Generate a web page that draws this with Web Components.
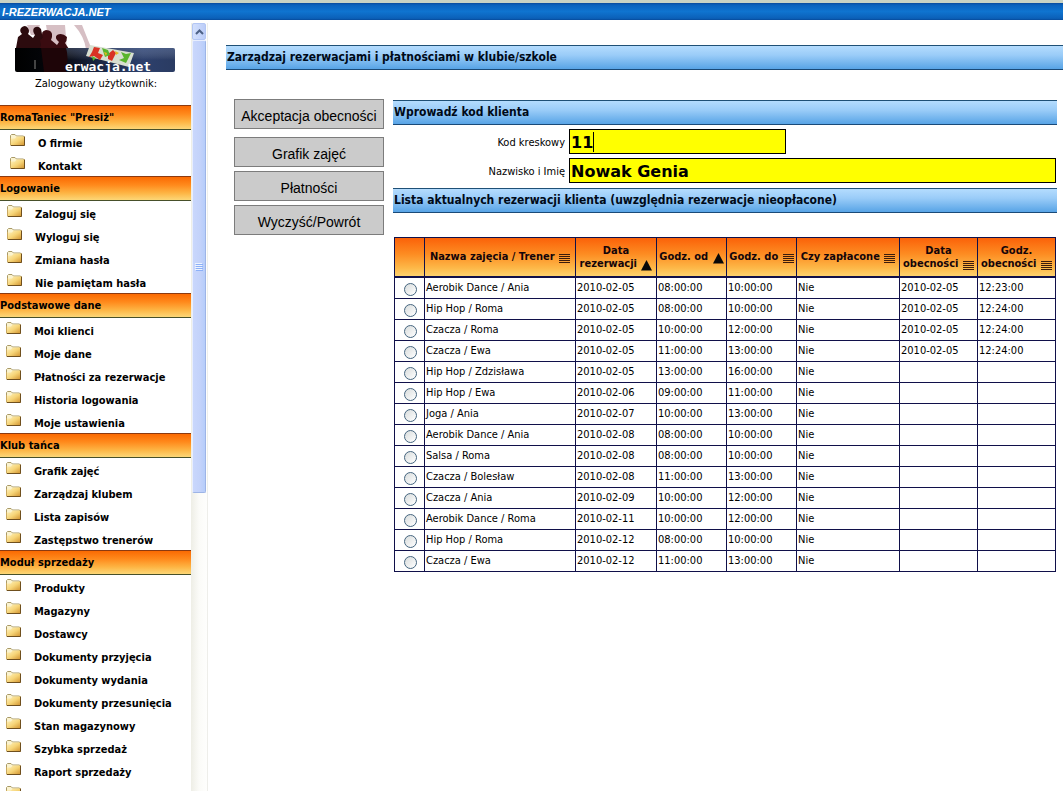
<!DOCTYPE html>
<html lang="pl">
<head>
<meta charset="utf-8">
<title>I-REZERWACJA.NET</title>
<style>
  html, body { height: 100%; }
  body { margin: 0; background: #fff; color: #000; overflow: hidden;
    font-family: "DejaVu Sans Condensed", "DejaVu Sans", sans-serif; font-size: 11px; }
</style>
</head>
<body>
<app-shell>
  <side-menu slot="side">
    <menu-section heading='RomaTaniec "Presiż"' style="--indent:10px">
      <menu-item>O firmie</menu-item><menu-item>Kontakt</menu-item>
    </menu-section>
    <menu-section heading="Logowanie" style="--indent:7px">
      <menu-item>Zaloguj się</menu-item><menu-item>Wyloguj się</menu-item><menu-item>Zmiana hasła</menu-item><menu-item>Nie pamiętam hasła</menu-item>
    </menu-section>
    <menu-section heading="Podstawowe dane">
      <menu-item>Moi klienci</menu-item><menu-item>Moje dane</menu-item><menu-item>Płatności za rezerwacje</menu-item><menu-item>Historia logowania</menu-item><menu-item>Moje ustawienia</menu-item>
    </menu-section>
    <menu-section heading="Klub tańca">
      <menu-item>Grafik zajęć</menu-item><menu-item>Zarządzaj klubem</menu-item><menu-item>Lista zapisów</menu-item><menu-item>Zastępstwo trenerów</menu-item>
    </menu-section>
    <menu-section heading="Moduł sprzedaży">
      <menu-item>Produkty</menu-item><menu-item>Magazyny</menu-item><menu-item>Dostawcy</menu-item><menu-item>Dokumenty przyjęcia</menu-item><menu-item>Dokumenty wydania</menu-item><menu-item>Dokumenty przesunięcia</menu-item><menu-item>Stan magazynowy</menu-item><menu-item>Szybka sprzedaż</menu-item><menu-item>Raport sprzedaży</menu-item><menu-item></menu-item>
    </menu-section>
  </side-menu>
  <blue-band>Zarządzaj rezerwacjami i płatnościami w klubie/szkole</blue-band>
  <booking-panel></booking-panel>
</app-shell>

<script>
const define = (name, html, setup) => {
  const tpl = document.createElement('template');
  tpl.innerHTML = html;
  customElements.define(name, class extends HTMLElement {
    constructor() {
      super();
      this.attachShadow({ mode: 'open' }).append(tpl.content.cloneNode(true));
    }
    connectedCallback() { if (setup) setup(this, this.shadowRoot); }
  });
};

define('app-shell', `
<style>
  :host { display: flex; flex-direction: column; height: 100vh; }
  header { flex: none; box-sizing: border-box; height: 20px; border-top: 3px solid #c9d3c4; padding-left: 2px;
    background: linear-gradient(#0a4a9c 0, #0a62bd 2px, #0f74d0 50%, #0b60b8 90%, #06499a); }
  h1 { margin: 0; font-size: 11px; line-height: 19px; font-style: italic; font-weight: bold; color: #fff;
    font-family: "Liberation Sans", sans-serif; }
  .cols { flex: 1; min-height: 0; display: flex; padding-top: 3px; }
  aside { flex: none; width: 191px; overflow: hidden; }
  main { flex: 1; min-width: 0; padding: 22px 0 0 18px; }
</style>
<header><h1>I-REZERWACJA.NET</h1></header>
<div class="cols">
  <aside><slot name="side"></slot></aside>
  <scroll-track></scroll-track>
  <main><slot></slot></main>
</div>`);

define('scroll-track', `
<style>
  :host { flex: none; display: flex; flex-direction: column; box-sizing: border-box; width: 17px; padding: 0 1px;
    background: linear-gradient(90deg, #eeeee6, #fbfbf8 50%, #fefefd); border-right: 1px solid #eeeeea; }
  .up { flex: none; height: 17px; display: grid; place-items: center; box-sizing: border-box;
    border: 1px solid #b3c6f4; border-radius: 2px; background: linear-gradient(90deg, #d3e0fd, #bccdf8); }
  .thumb { height: 59%; box-sizing: border-box; border: 1px solid #9db4e6; border-left-color: #e8eefe; border-top-color: #e8eefe; border-radius: 2px;
    background: linear-gradient(90deg, #c9d7fc 0, #c3d2fa 60%, #b6cdfa); display: grid; place-items: center; }
  svg { display: block; }
</style>
<div class="up"><svg width="9" height="6" viewBox="0 0 9 6"><path d="M1 5L4.500 1.500L8 5" fill="none" stroke="#4d6185" stroke-width="2"/></svg></div>
<div class="thumb"><svg width="8" height="8" viewBox="0 0 8 8" shape-rendering="crispEdges"><path d="M0 .5h7M0 2.500h7M0 4.500h7M0 6.500h7" stroke="#eef4fe"/><path d="M1 1.500h7M1 3.500h7M1 5.500h7M1 7.500h7" stroke="#8cb0f8"/></svg></div>`);

define('side-menu', `
<style>
  :host { display: block; }
  .top { height: 82px; }
  svg { display: block; }
  p { margin: 0; padding-left: 35px; line-height: 17px; padding-top: 2px; }
</style>
<div class="top">
  <svg width="191" height="50" viewBox="0 0 191 50" role="img" aria-label="i-rezerwacja.net">
    <defs>
      <linearGradient id="bar"><stop offset="0" stop-color="#000"/><stop offset=".28" stop-color="#05070d"/><stop offset=".5" stop-color="#17233f"/><stop offset=".8" stop-color="#2d406c"/><stop offset="1" stop-color="#2a3b62"/></linearGradient>
      <linearGradient id="shade" x2="0" y2="1"><stop offset="0" stop-color="#8ba0cc" stop-opacity=".3"/><stop offset=".5" stop-color="#fff" stop-opacity="0"/></linearGradient>
    </defs>
    <path d="M27 2H40L36 12H31ZM46 2H65L67 27H50ZM74 2H82L92 27L86 26Q84 13 74 2Z" fill="#d6bfc4"/>
    <path d="M16 25L18 14L22 11Q19 8 21 5Q25 1 28 5Q30 8 28 11L33 15L35 12Q32 8 34 5Q38 2 41 6L42 11L44 13Q40 22 42 26V49H20Z" fill="#2c0b0e"/>
    <path d="M41 22L40 17L43 15Q40 8 46 7Q53 7 52 14L51 17L57 22L59 19Q54 15 57 12Q62 9 67 14Q67 18 65 20L69 26V49H41L39 27Z" fill="#3a0b10"/>
    <path d="M15 25H173Q175 25 175 27V47Q175 49 173 49H17Q15 49 15 47Z" fill="url(#bar)"/>
    <path d="M66 25H173Q175 25 175 27V49H68Z" fill="url(#shade)"/>
    <path d="M41 25H66Q69 35 66 49H44Z" fill="#1e0508"/>
    <path d="M90 22L134 30L129 44L86 33Z" fill="#d8dfd0"/>
    <path d="M94 24l6 1-2 5 5 2-3 5-6-4-5 1 3-5zM108 31l5-4 3 3-4 8-4-2z" fill="#d93225"/>
    <path d="M102 25l6 2 2 5-5 2zM121 29l5 2 5-1-5 10-7-3 5-2zM92 33l4 2-3 3z" fill="#59b52d"/>
    <path d="M104 29l3 1-1 3zM115 28l4 2-3 2z" fill="#e9b91f"/>
    <path d="M34 37h2v9h-2z" fill="#444"/>
    <text x="65" y="48" font-family="DejaVu Sans Mono, monospace" font-size="13" font-weight="bold" fill="#fff">erwacja.net</text>
  </svg>
  <p>Zalogowany użytkownik:</p>
</div>
<slot></slot>`);

define('menu-section', `
<style>
  :host { display: block; --pad: var(--indent, 6px); }
  h2 { margin: 0; box-sizing: border-box; height: 25px; font-size: 11px; line-height: 24px; font-weight: bold; white-space: nowrap;
    border-top: 1px solid #8c3a10; border-bottom: 1px solid #47502a;
    background: linear-gradient(#fb6a02, #ff8a1c 35%, #fdb544 70%, #fcd777); }
</style>
<h2></h2><slot></slot>`, (el, root) => { root.querySelector('h2').textContent = el.getAttribute('heading'); });

define('menu-item', `
<style>
  :host { display: block; }
  a { display: flex; gap: 12px; height: 23px; box-sizing: border-box; padding-left: var(--pad); color: #000; text-decoration: none;
    font-weight: bold; line-height: 28px; white-space: nowrap; }
  svg { flex: none; margin-top: 4px; }
</style>
<a href="#">
  <svg width="16" height="13" viewBox="0 0 16 13" aria-hidden="true">
    <defs><linearGradient id="f" x2="1" y2="1"><stop offset="0" stop-color="#fff3c0"/><stop offset=".5" stop-color="#f6d477"/><stop offset="1" stop-color="#d0902c"/></linearGradient></defs>
    <path d="M.5 11.500V1.500L1.500.5H5L6.500 2H13.500V4" fill="#fbf3cf" stroke="#a99a68"/>
    <path d="M1 11.500V4.500L5 4.500L6.500 2.500H15V11.500Z" fill="url(#f)"/>
    <path d="M1 11.500H14.500V2.500" fill="none" stroke="#6f4f1e"/>
    <path d="M.5 11V4" stroke="#c8a860"/>
  </svg>
  <slot></slot>
</a>`);

define('blue-band', `
<style>
  :host { display: block; }
  h2 { margin: 0; box-sizing: border-box; height: 25px; padding-left: 1px; font-size: 12px; line-height: 23px; font-weight: bold; white-space: nowrap;
    color: #000a18; border-top: 1px solid #1f5076; border-bottom: 1px solid #1a4a78;
    background: linear-gradient(#b4dcfe, #9accf8 40%, #58a4e6); }
</style>
<h2><slot></slot></h2>`);

define('grey-button', `
<style>
  :host { display: block; }
  button { display: block; width: 100%; height: 30px; box-sizing: border-box; margin: 0; padding: 3px 0 0; border: 1px solid #7c7c7c;
    background: #cbcbcb; color: #000; font: 14px "Liberation Sans", sans-serif; white-space: nowrap; }
</style>
<button type="button"><slot></slot></button>`);

define('client-field', `
<style>
  :host { display: flex; align-items: center; gap: 4px; }
  label { flex: none; width: 172px; text-align: right; padding-top: 1px; }
  input { flex: 1; min-width: 0; max-width: var(--field, none); height: 25px; box-sizing: border-box; margin: 0; padding: 1px 1px 0;
    border: 1px solid #000; border-radius: 0; outline: none; background: #ff0; color: #000;
    font: bold 16px "DejaVu Sans", sans-serif; }
  .box { position: relative; flex: 1; display: flex; min-width: 0; }
  .caret { display: none; position: absolute; left: 24px; top: 3px; width: 1px; height: 20px; background: #000; }
  :host([active]) .caret { display: block; }
</style>
<label for="v"></label><div class="box"><input id="v" type="text"><span class="caret"></span></div>`, (el, root) => {
  root.querySelector('label').textContent = el.getAttribute('label');
  root.querySelector('input').value = el.getAttribute('value');
});

define('booking-table', `
<style>
  :host { display: block; }
  table { width: 100%; border-collapse: collapse; table-layout: fixed; }
  th, td { border: 1px solid #10104a; padding: 0 0 0 1px; text-align: left; font-size: 11px; white-space: nowrap; }
  thead { background: linear-gradient(#fb6209, #fd8c22 40%, #fdb848 75%, #fdd877); }
  th { height: 38px; padding: 0; border-bottom: 2px solid #10104a; }
  th button { display: block; width: 100%; margin: 0; padding: 0; border: 0; background: none; color: #14050a; text-align: center; white-space: nowrap;
    font: bold 11px/13px "DejaVu Sans Condensed", "DejaVu Sans", sans-serif; }
  th svg { vertical-align: -4px; margin-left: 1px; }
  td { height: 20px; line-height: 19px; vertical-align: top; }
  td:first-child { padding: 0 0 0 2px; }
  input { appearance: none; display: block; box-sizing: border-box; width: 13px; height: 13px; margin: 5px auto 0; border: 1px solid #45657f; border-radius: 50%;
    background: linear-gradient(135deg, #d8dcdc, #fff); }
</style>
<table>
  <colgroup><col style="width:30px"><col><col style="width:81px"><col style="width:70px"><col style="width:70px"><col style="width:103px"><col style="width:78px"><col style="width:78px"></colgroup>
  <thead><tr><th></th></tr></thead><tbody></tbody>
</table>`, (el, root) => {
  const icons = {
    up: '<svg width="11" height="11" viewBox="0 0 11 11"><path d="M5.500 0L11 10.500H0Z" fill="#080808"/></svg>',
    none: '<svg width="11" height="11" viewBox="0 0 11 11" shape-rendering="crispEdges"><path d="M0 1.500h11M0 3.500h11M0 5.500h11M0 7.500h11M0 9.500h11" stroke="#3c1c0c"/></svg>'
  };
  const heads = [['Nazwa zajęcia / Trener', 'none'], ['Data<br>rezerwacji', 'up'], ['Godz. od', 'up'], ['Godz. do', 'none'],
    ['Czy zapłacone', 'none'], ['Data<br>obecności', 'none'], ['Godz.<br>obecności', 'none']];
  root.querySelector('thead tr').insertAdjacentHTML('beforeend',
    heads.map(([t, i]) => `<th scope="col"><button type="button">${t} ${icons[i]}</button></th>`).join(''));
  const rows = [
    ['Aerobik Dance / Ania', '2010-02-05', '08', '10', '12:23:00'],
    ['Hip Hop / Roma', '2010-02-05', '08', '10', '12:24:00'],
    ['Czacza / Roma', '2010-02-05', '10', '12', '12:24:00'],
    ['Czacza / Ewa', '2010-02-05', '11', '13', '12:24:00'],
    ['Hip Hop / Zdzisława', '2010-02-05', '13', '16'],
    ['Hip Hop / Ewa', '2010-02-06', '09', '11'],
    ['Joga / Ania', '2010-02-07', '10', '13'],
    ['Aerobik Dance / Ania', '2010-02-08', '08', '10'],
    ['Salsa / Roma', '2010-02-08', '08', '10'],
    ['Czacza / Bolesław', '2010-02-08', '11', '13'],
    ['Czacza / Ania', '2010-02-09', '10', '12'],
    ['Aerobik Dance / Roma', '2010-02-11', '10', '12'],
    ['Hip Hop / Roma', '2010-02-12', '08', '10'],
    ['Czacza / Ewa', '2010-02-12', '11', '13']];
  root.querySelector('tbody').innerHTML = rows.map(([n, d, a, b, p]) =>
    `<tr><td><input type="radio" name="row" aria-label="${n} ${d}"></td><td>${n}</td><td>${d}</td><td>${a}:00:00</td><td>${b}:00:00</td><td>Nie</td><td>${p ? d : ''}</td><td>${p || ''}</td></tr>`).join('');
});

define('booking-panel', `
<style>
  :host { display: flex; gap: 9px; padding: 29px 6px 0 8px; }
  nav { flex: none; width: 150px; display: flex; flex-direction: column; gap: 4px; }
  nav grey-button:first-child { margin-bottom: 4px; }
  section { flex: 1; min-width: 0; padding-top: 1px; }
  form { display: grid; gap: 4px; padding: 4px 1px 5px 0; }
  booking-table { padding: 24px 1px 0; }
</style>
<nav>
  <grey-button>Akceptacja obecności</grey-button>
  <grey-button>Grafik zajęć</grey-button>
  <grey-button>Płatności</grey-button>
  <grey-button>Wyczyść/Powrót</grey-button>
</nav>
<section>
  <blue-band>Wprowadź kod klienta</blue-band>
  <form>
    <client-field label="Kod kreskowy" value="11" active style="--field:217px"></client-field>
    <client-field label="Nazwisko i Imię" value="Nowak Genia"></client-field>
  </form>
  <blue-band>Lista aktualnych rezerwacji klienta (uwzględnia rezerwacje nieopłacone)</blue-band>
  <booking-table></booking-table>
</section>`);
</script>
</body>
</html>
